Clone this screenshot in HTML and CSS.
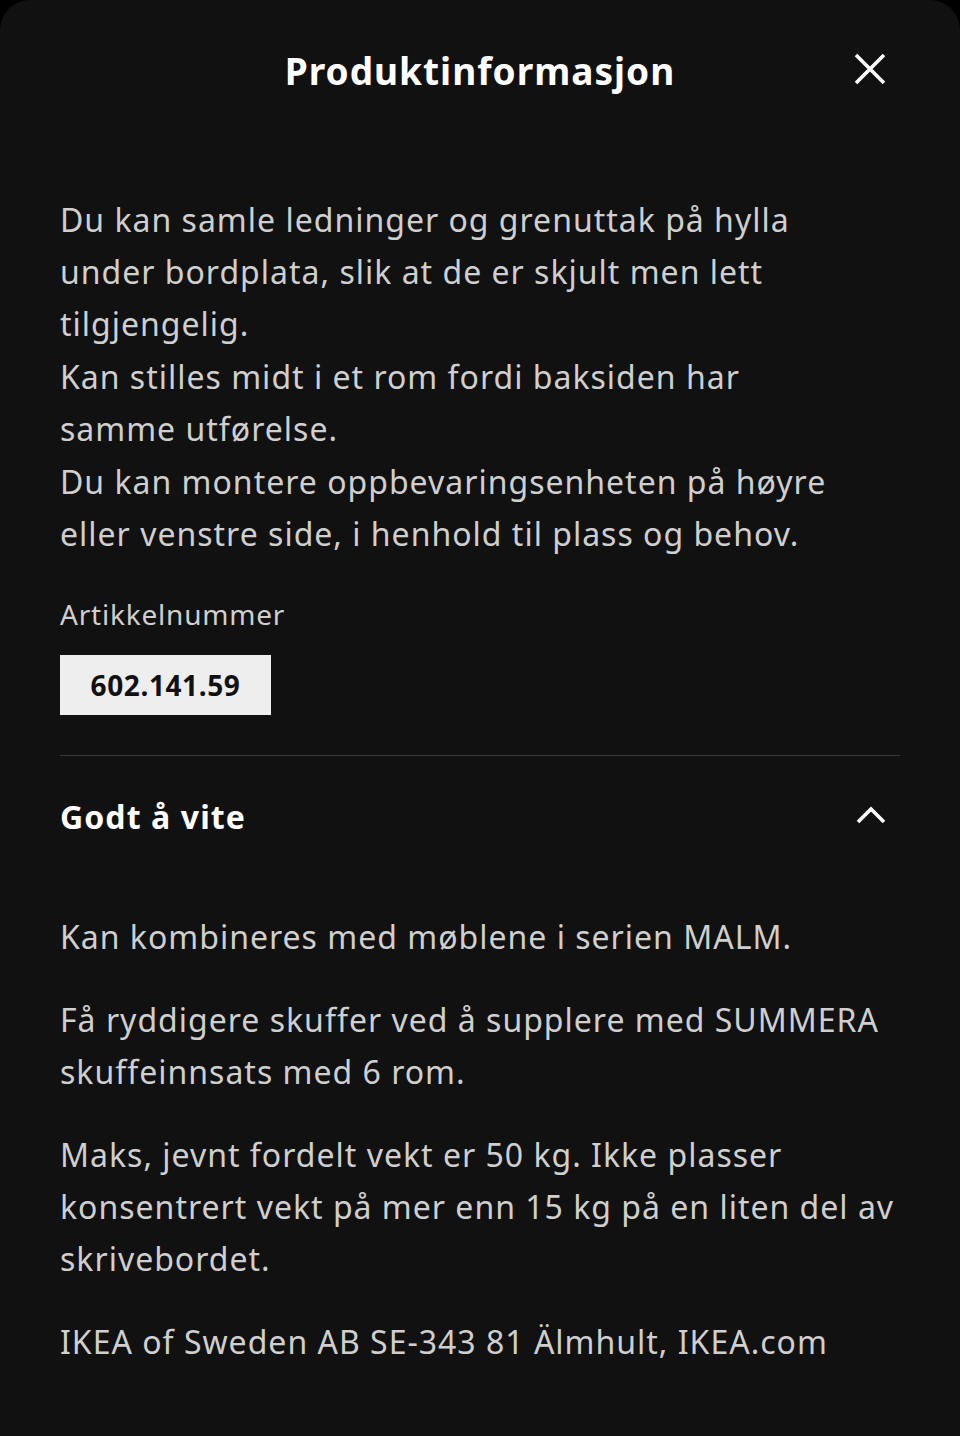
FILE: index.html
```html
<!DOCTYPE html>
<html lang="no">
<head>
<meta charset="utf-8">
<title>Produktinformasjon</title>
<link rel="stylesheet" href="styles.css">
</head>
<body>
<div class="sheet">
  <header class="sheet-header">
    <h1 class="sheet-title">Produktinformasjon</h1>
    <button class="icon-btn close-btn" aria-label="Lukk">
      <svg width="34" height="34" viewBox="0 0 34 34"><path d="M3 3 L31 31 M31 3 L3 31" stroke="#fff" stroke-width="3.6" fill="none"/></svg>
    </button>
  </header>
  <section class="intro">
    <p>Du kan samle ledninger og grenuttak på hylla under bordplata, slik at de er skjult men lett tilgjengelig.</p>
    <p>Kan stilles midt i et rom fordi baksiden har samme utførelse.</p>
    <p>Du kan montere oppbevaringsenheten på høyre eller venstre side, i henhold til plass og behov.</p>
    <div class="art-label">Artikkelnummer</div>
    <div class="art-number">602.141.59</div>
  </section>
  <section class="accordion">
    <div class="acc-header">
      <h2 class="acc-title">Godt å vite</h2>
      <svg class="chevron" width="32" height="20" viewBox="0 0 32 20"><path d="M3 17 L16 4 L29 17" stroke="#fff" stroke-width="3.6" fill="none"/></svg>
    </div>
    <div class="acc-body">
      <p>Kan kombineres med møblene i serien MALM.</p>
      <p>Få ryddigere skuffer ved å supplere med SUMMERA skuffeinnsats med 6 rom.</p>
      <p>Maks, jevnt fordelt vekt er 50 kg. Ikke plasser konsentrert vekt på mer enn 15 kg på en liten del av skrivebordet.</p>
      <p>IKEA of Sweden AB SE-343 81 Älmhult, IKEA.com</p>
    </div>
  </section>
</div>
</body>
</html>
```
FILE: styles.css
```css
html, body {
  margin: 0;
  padding: 0;
  background: #000;
}
body {
  font-family: "Noto Sans", "Open Sans", sans-serif;
  color: #cfcfcf;
}
.sheet {
  background: #111;
  border-radius: 30px 30px 0 0;
  min-height: 1436px;
  box-sizing: border-box;
  padding: 0 60px;
}
.sheet-header {
  height: 140px;
  display: flex;
  align-items: center;
  justify-content: center;
  position: relative;
}
.sheet-title {
  margin: 0;
  font-size: 37px;
  font-weight: 700;
  color: #fff;
  letter-spacing: 1px;
}
.icon-btn {
  background: none;
  border: 0;
  padding: 0;
  display: flex;
}
.close-btn {
  position: absolute;
  right: 13px;
  top: 52px;
}
.intro {
  padding-top: 54px;
}
.intro p {
  margin: 0 0 1px;
  max-width: 800px;
  font-size: 32px;
  line-height: 52px;
  letter-spacing: 1px;
}
.art-label {
  margin-top: 34px;
  font-size: 28px;
  line-height: 40px;
  letter-spacing: 0.8px;
}
.art-number {
  margin-top: 21px;
  display: inline-block;
  background: #eee;
  color: #111;
  font-weight: 700;
  font-size: 28px;
  line-height: 60px;
  letter-spacing: 0.6px;
  text-align: center;
  width: 211px;
}
.accordion {
  margin-top: 40px;
  border-top: 1px solid #3a3a3a;
}
.acc-header {
  height: 120px;
  display: flex;
  align-items: center;
  justify-content: space-between;
  padding-right: 13px;
}
.acc-title {
  margin: 0;
  font-size: 32px;
  font-weight: 700;
  color: #fff;
  letter-spacing: 1.1px;
}
.chevron {
  margin-top: -2px;
}
.acc-body {
  padding-top: 35px;
}
.acc-body p {
  margin: 0 0 31px;
  font-size: 32px;
  line-height: 52px;
  letter-spacing: 1px;
}
```
